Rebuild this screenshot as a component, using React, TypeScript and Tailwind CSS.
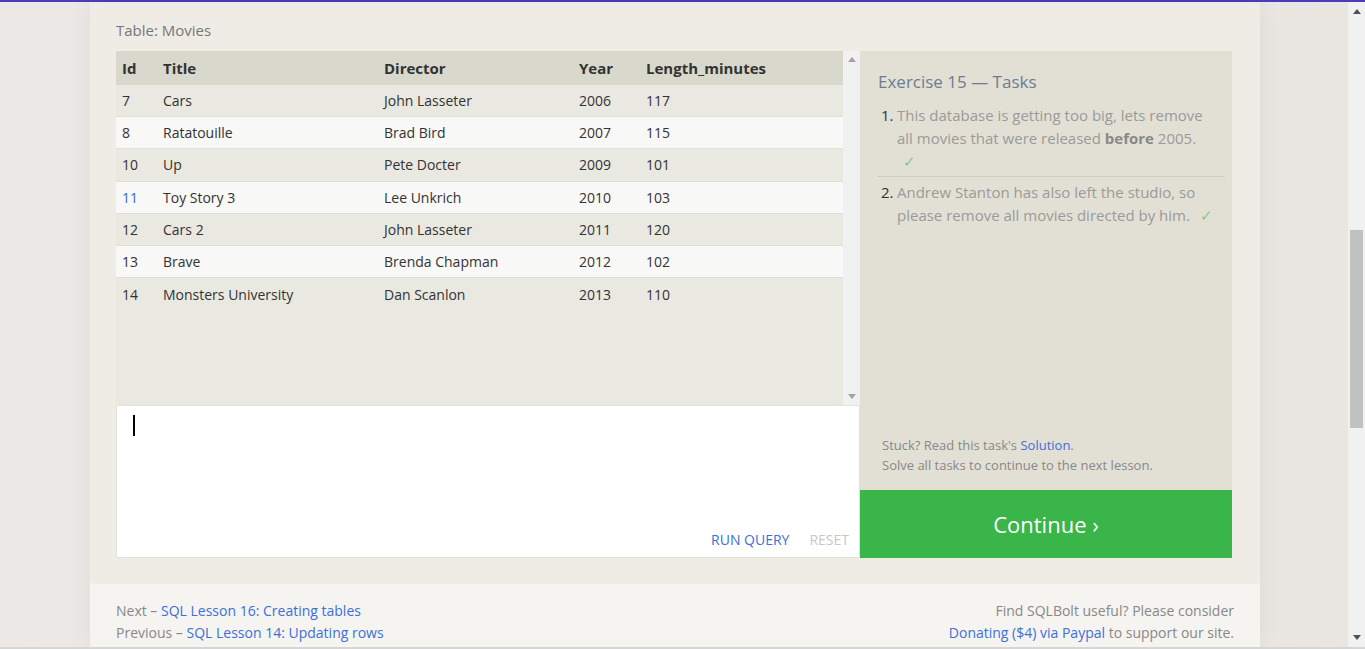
// SQLBolt exercise page - table preview, query editor, tasks panel

const rows = [
  { id: "7", title: "Cars", director: "John Lasseter", year: "2006", len: "117" },
  { id: "8", title: "Ratatouille", director: "Brad Bird", year: "2007", len: "115" },
  { id: "10", title: "Up", director: "Pete Docter", year: "2009", len: "101" },
  { id: "11", title: "Toy Story 3", director: "Lee Unkrich", year: "2010", len: "103" },
  { id: "12", title: "Cars 2", director: "John Lasseter", year: "2011", len: "120" },
  { id: "13", title: "Brave", director: "Brenda Chapman", year: "2012", len: "102" },
  { id: "14", title: "Monsters University", director: "Dan Scanlon", year: "2013", len: "110" },
];

const cols = "grid grid-cols-[41px_221px_195px_67px_1fr]";

function UpArrow({ className }: { className?: string }) {
  return (
    <svg className={className} width="8" height="5" viewBox="0 0 8 5">
      <path d="M0 5 L4 0 L8 5 Z" fill="currentColor" />
    </svg>
  );
}

function DownArrow({ className }: { className?: string }) {
  return (
    <svg className={className} width="8" height="5" viewBox="0 0 8 5">
      <path d="M0 0 L8 0 L4 5 Z" fill="currentColor" />
    </svg>
  );
}

function MoviesTable() {
  return (
    <div className="flex h-[354px] bg-[#e9e8e1]">
      <div className="flex-1 flex flex-col text-[14px] text-[#333]">
        <div className={`${cols} h-[34px] items-center bg-[#d9d8cc] font-bold text-[15px]`}>
          <div className="pl-[6px]">Id</div>
          <div className="pl-[6px]">Title</div>
          <div className="pl-[6px]">Director</div>
          <div className="pl-[6px]">Year</div>
          <div className="pl-[6px]">Length_minutes</div>
        </div>
        {rows.map((r, i) => (
          <div
            key={r.id}
            className={`${cols} h-[32.2px] items-center ${
              i < rows.length - 1 ? "border-b border-[#e0dfd8]" : ""
            } ${i % 2 === 0 ? "bg-[#e9e8e1]" : "bg-[#f8f8f6]"}`}
          >
            <div className={`pl-[6px] ${r.id === "11" ? "text-[#3a6bc0]" : ""}`}>{r.id}</div>
            <div className="pl-[6px]">{r.title}</div>
            <div className="pl-[6px]">{r.director}</div>
            <div className="pl-[6px]">{r.year}</div>
            <div className="pl-[6px]">{r.len}</div>
          </div>
        ))}
      </div>
      <div className="w-[17px] bg-[#f1f1f1] flex flex-col items-center justify-between py-[6px] text-[#a3a3a3]">
        <UpArrow />
        <DownArrow />
      </div>
    </div>
  );
}

function Editor() {
  return (
    <div className="h-[153px] bg-white border border-[#e3e1d8] flex flex-col">
      <div className="flex-1 pl-[16px] pt-[9px]">
        <div className="w-[2px] h-[21px] bg-black" />
      </div>
      <div className="flex justify-end gap-[20px] pr-[10px] pb-[7px] text-[14px]">
        <span className="text-[#3d6fd9]">RUN QUERY</span>
        <span className="text-[#c8c8c8]">RESET</span>
      </div>
    </div>
  );
}

function Tasks() {
  return (
    <div className="w-[372px] flex flex-col">
      <div className="flex-1 bg-[#e2e0d5] pl-[18px] pr-[7px] pt-[19px] pb-[15px] flex flex-col">
        <h2 className="text-[17px] leading-[24px] text-[#6e7c8e]">Exercise 15 — Tasks</h2>
        <ol className="mt-[10px] text-[15px] leading-[23px] text-[#9a9a9a]">
          <li className="flex border-b border-[#cfcdc2] pb-[3px]">
            <span className="w-[19px] pl-[3px] text-[#333] shrink-0">1.</span>
            <span className="pr-[6px]">
              This database is getting too big, lets remove all movies that were released{" "}
              <b className="text-[#888]">before</b> 2005.
              <br />
              <span className="pl-[6px] text-[#86c98e]">✓</span>
            </span>
          </li>
          <li className="flex pt-[4px]">
            <span className="w-[19px] pl-[3px] text-[#333] shrink-0">2.</span>
            <span className="pr-[4px]">
              Andrew Stanton has also left the studio, so please remove all movies directed by him.
              <span className="pl-[10px] text-[#86c98e]">✓</span>
            </span>
          </li>
        </ol>
        <div className="mt-auto pl-[4px] text-[13px] leading-[20px] text-[#888]">
          <p>
            Stuck? Read this task's <span className="text-[#3d6fd9]">Solution</span>.
          </p>
          <p>Solve all tasks to continue to the next lesson.</p>
        </div>
      </div>
      <div className="h-[68px] bg-[#39b54a] flex items-center justify-center text-white text-[22px]">
        Continue ›
      </div>
    </div>
  );
}

export default function App() {
  return (
    <div
      className="h-[649px] flex flex-col overflow-hidden bg-[#ede8e5]"
      style={{ fontFamily: '"Open Sans", "Noto Sans", sans-serif' }}
    >
      <div className="h-[2px] bg-[#4b3bbf]" />
      <div className="flex flex-1 min-h-0">
        <div className="flex-1 pl-[90px] bg-gradient-to-r from-[#ece8e5] via-[#ede9e6] to-[#e9e5e1]">
          <div className="w-[1170px] h-full flex flex-col bg-[#f5f4f0] shadow-[0_0_24px_rgba(0,0,0,0.06)]">
            <div className="bg-[#efece6] rounded-b-[4px] px-[26px] pt-[18px] pb-[26px]">
              <div className="text-[15px] leading-[20px] text-[#777]">Table: Movies</div>
              <div className="mt-[11px] flex h-[507px]">
                <div className="w-[744px] flex flex-col">
                  <MoviesTable />
                  <Editor />
                </div>
                <Tasks />
              </div>
            </div>
            <div className="flex justify-between px-[26px] pt-[16px] text-[14px] leading-[22px] text-[#888]">
              <div>
                <p>
                  Next – <span className="text-[#3d6fd9]">SQL Lesson 16: Creating tables</span>
                </p>
                <p>
                  Previous – <span className="text-[#3d6fd9]">SQL Lesson 14: Updating rows</span>
                </p>
              </div>
              <div className="text-right">
                <p>Find SQLBolt useful? Please consider</p>
                <p>
                  <span className="text-[#3d6fd9]">Donating ($4) via Paypal</span> to support our site.
                </p>
              </div>
            </div>
          </div>
        </div>
        <div className="w-[17px] bg-[#f1f1f1] flex flex-col items-center py-[7px] text-[#505050]">
          <UpArrow />
          <div className="mt-[216px] w-[13px] h-[198px] bg-[#c1c1c1]" />
          <div className="mt-auto">
            <DownArrow />
          </div>
        </div>
      </div>
      <div className="h-[2px] bg-[#d6d6d6]" />
    </div>
  );
}
